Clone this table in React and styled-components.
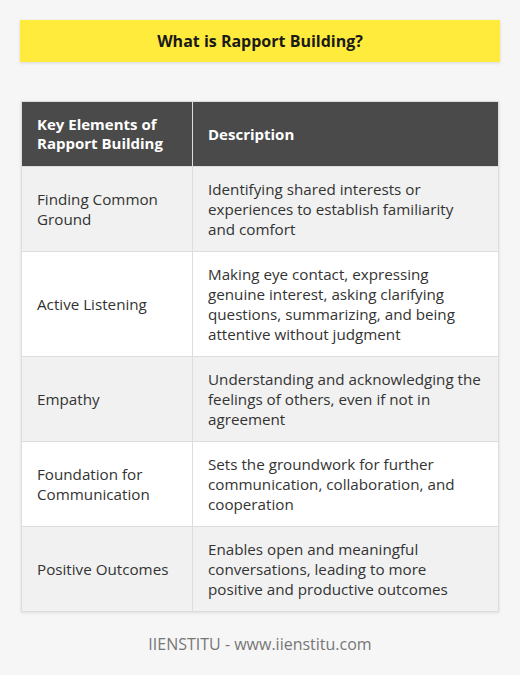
import React from "react";
import styled, { createGlobalStyle } from "styled-components";

const Global = createGlobalStyle`
  html, body { margin: 0; padding: 0; background: #f6f6f6; }
  body { font-family: "Open Sans", "Liberation Sans", sans-serif; }
`;

const Page = styled.div`
  width: 520px;
  min-height: 675px;
  box-sizing: border-box;
  padding: 20px 20px 0 20px;
  background: #f6f6f6;
`;

const TitleBar = styled.div`
  height: 42px;
  background: #ffeb3b;
  display: flex;
  align-items: center;
  justify-content: center;
  box-shadow: 0 1px 3px rgba(0, 0, 0, 0.12);
`;

const Title = styled.h1`
  margin: 0;
  font-size: 16px;
  font-weight: 700;
  color: #1a1a1a;
`;

const Table = styled.table`
  margin: 39px 1px 0 1px;
  width: 478px;
  border-collapse: collapse;
  table-layout: fixed;
  box-shadow: 0 1px 3px rgba(0, 0, 0, 0.1);
`;

const HeadCell = styled.th`
  background: #4a4a4a;
  color: #ffffff;
  text-align: left;
  font-size: 15px;
  font-weight: 700;
  line-height: 19px;
  padding: 13px 15px;
  border: 1px solid #dddddd;
`;

const Row = styled.tr`
  background: ${(p) => (p.$alt ? "#f1f1f1" : "#ffffff")};
`;

const Cell = styled.td`
  font-size: 15.2px;
  line-height: 20px;
  color: #333333;
  padding: 12px 16px 12px 15px;
  border: 1px solid #dddddd;
  vertical-align: middle;
`;

const Footer = styled.div`
  text-align: center;
  margin-top: 21px;
  font-size: 16px;
  color: #777777;
`;

const rows = [
  ["Finding Common Ground", "Identifying shared interests or experiences to establish familiarity and comfort"],
  ["Active Listening", "Making eye contact, expressing genuine interest, asking clarifying questions, summarizing, and being attentive without judgment"],
  ["Empathy", "Understanding and acknowledging the feelings of others, even if not in agreement"],
  ["Foundation for Communication", "Sets the groundwork for further communication, collaboration, and cooperation"],
  ["Positive Outcomes", "Enables open and meaningful conversations, leading to more positive and productive outcomes"],
];

export default function App() {
  return (
    <Page>
      <Global />
      <TitleBar>
        <Title>What is Rapport Building?</Title>
      </TitleBar>
      <Table>
        <colgroup>
          <col style={{ width: "171px" }} />
          <col />
        </colgroup>
        <thead>
          <tr>
            <HeadCell>Key Elements of Rapport Building</HeadCell>
            <HeadCell>Description</HeadCell>
          </tr>
        </thead>
        <tbody>
          {rows.map(([k, d], i) => (
            <Row key={k} $alt={i % 2 === 0}>
              <Cell>{k}</Cell>
              <Cell>{d}</Cell>
            </Row>
          ))}
        </tbody>
      </Table>
      <Footer>IIENSTITU - www.iienstitu.com</Footer>
    </Page>
  );
}
